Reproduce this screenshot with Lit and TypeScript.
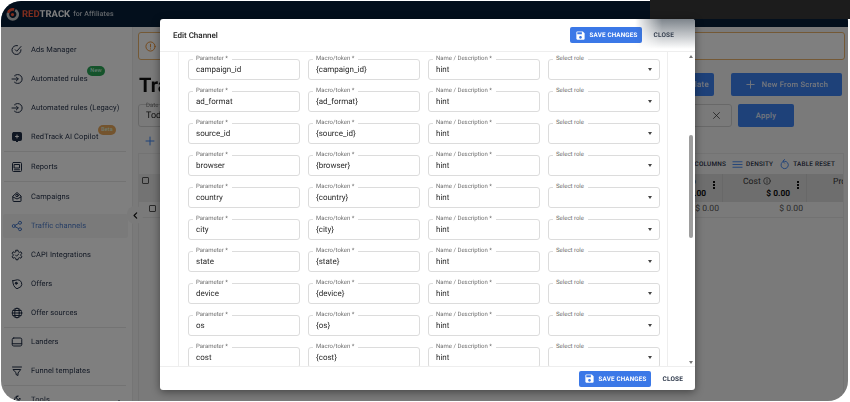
import { LitElement, html, css, svg } from "lit";
import { customElement } from "lit/decorators.js";

const ico = (body: unknown, cls = "ico") =>
  html`<svg class=${cls} viewBox="0 0 24 24" fill="none" stroke="currentColor" stroke-width="2" stroke-linecap="round" stroke-linejoin="round">${body}</svg>`;

const SAVE = svg`<path fill="currentColor" stroke="none" d="M17 3H5c-1.11 0-2 .9-2 2v14c0 1.1.89 2 2 2h14c1.1 0 2-.9 2-2V7l-4-4zm-5 16c-1.66 0-3-1.34-3-3s1.34-3 3-3 3 1.34 3 3-1.34 3-3 3zm3-10H5V5h10v4z"/>`;

const ICONS: Record<string, unknown> = {
  ads: svg`<path d="M20 11.5A9 9 0 1 1 13 3.2"/><path d="M8.5 11.5l3 3L20 5"/>`,
  rule: svg`<path d="M7 5.5A9 9 0 1 1 7 18.5"/><path d="M2 12h12"/><path d="M10.5 8l4 4-4 4"/>`,
  copilot: svg`<rect x="3" y="3" width="18" height="16" rx="2" fill="currentColor"/><path d="M9 19l3 3 3-3" fill="currentColor"/><path d="M12 8v6M9 11h6" stroke="#fff"/>`,
  reports: svg`<rect x="3" y="3" width="18" height="18" rx="2"/><rect x="7" y="7" width="10" height="7"/><path d="M7 17.5h10"/>`,
  camp: svg`<path d="M4 10l8-7 8 7v10a1 1 0 0 1-1 1H5a1 1 0 0 1-1-1z"/><path d="M4 12l8 4 8-4"/><circle cx="12" cy="9" r="2.5"/>`,
  traffic: svg`<circle cx="5.5" cy="12" r="3"/><circle cx="18" cy="5.5" r="3"/><circle cx="18" cy="18.5" r="3"/><path d="M8.2 10.5l7-3.6M8.2 13.5l7 3.6"/>`,
  capi: svg`<path d="M10 2.5h4l.6 3 2.4 1.2 2.8-1.1 2 3.4-2.3 2v2l2.3 2-2 3.4-2.8-1.1-2.4 1.2-.6 3h-4l-.6-3L7 17.3l-2.8 1.1-2-3.4 2.3-2v-2l-2.3-2 2-3.4L7 6.7l2.4-1.2z"/><path d="M9 12l2.2 2.2L15.5 10"/>`,
  offers: svg`<path d="M3.5 5.5L13 3.5a8.5 8.5 0 0 1 6.5 14L12 21.5C6 19 3.5 12 3.5 5.5z"/><circle cx="10.5" cy="10.5" r="2" fill="currentColor"/>`,
  globe: svg`<circle cx="12" cy="12" r="9.5"/><ellipse cx="12" cy="12" rx="4.5" ry="9.5"/><path d="M2.5 12h19M4 7h16M4 17h16"/>`,
  landers: svg`<rect x="2.5" y="4" width="19" height="16" rx="3"/><path d="M2.5 15.5h19"/>`,
  funnel: svg`<path d="M3 4h18"/><path d="M4.5 9h15L14 16v5l-4-2v-3z"/>`,
  tools: svg`<path d="M14 4a5 5 0 0 0-6 6L3 15l3 4 5.5-5a5 5 0 0 0 6.5-6l-3 3-3-1-1-3z"/>`,
};

const NAV: { i: string; t: string; sep?: string; active?: boolean; badge?: string; caret?: boolean }[] = [
  { i: "ads", t: "Ads Manager" },
  { i: "rule", t: "Automated rules", badge: "New" },
  { i: "rule", t: "Automated rules (Legacy)" },
  { i: "copilot", t: "RedTrack AI Copilot", badge: "Beta", sep: "wide" },
  { i: "reports", t: "Reports", sep: "wide" },
  { i: "camp", t: "Campaigns" },
  { i: "traffic", t: "Traffic channels", active: true },
  { i: "capi", t: "CAPI Integrations" },
  { i: "offers", t: "Offers" },
  { i: "globe", t: "Offer sources", sep: "flat" },
  { i: "landers", t: "Landers" },
  { i: "funnel", t: "Funnel templates", sep: "flat" },
  { i: "tools", t: "Tools", caret: true },
];

const ROWS: [string, string][] = [
  ["campaign_id", "{campaign_id}"],
  ["ad_format", "{ad_format}"],
  ["source_id", "{source_id}"],
  ["browser", "{browser}"],
  ["country", "{country}"],
  ["city", "{city}"],
  ["state", "{state}"],
  ["device", "{device}"],
  ["os", "{os}"],
  ["cost", "{cost}"],
];

@customElement("app-root")
export class AppRoot extends LitElement {
  static styles = css`
    :host {
      display: block;
      width: 850px;
      height: 402px;
      box-sizing: border-box;
      padding: 1px 2px 1px 1px;
      background: #fff;
      font-family: Roboto, "Liberation Sans", sans-serif;
      position: relative;
      overflow: hidden;
      text-rendering: geometricPrecision;
    }
    .window {
      position: relative;
      height: 100%;
      border-radius: 20px;
      overflow: hidden;
      background: #f5f5f5;
      display: flex;
      flex-direction: column;
      filter: blur(0.35px);
    }
    .top {
      height: 26px;
      flex: none;
      background: #071f38;
      display: flex;
      align-items: center;
      padding-left: 5px;
      gap: 3px;
      font-size: 9.5px;
      font-weight: 700;
    }
    .logo { width: 13px; height: 13px; flex: none; }
    .red { color: #ff5a3c; }
    .track { color: #fff; margin-left: -3px; }
    .aff { color: #c4ccd4; font-weight: 500; font-size: 7px; letter-spacing: 0.1px; }
    .body { flex: 1; display: flex; min-height: 0; }
    .side {
      width: 132px;
      flex: none;
      background: #fff;
      border-right: 1px solid #eaeaea;
      padding-top: 8px;
      box-sizing: border-box;
      color: #1f2c44;
      overflow: hidden;
      display: flex;
      flex-direction: column;
    }
    .item {
      position: relative;
      height: 24px;
      flex: none;
      margin: 2.5px 4px 2.5px 2px;
      display: flex;
      align-items: center;
      font-size: 7.5px;
      letter-spacing: 0.1px;
      border-radius: 2px;
      white-space: nowrap;
    }
    .item.on { background: #f5f5f5; color: #4d7cc9; }
    .ico { width: 12px; height: 12px; margin-left: 8px; margin-right: 8px; flex: none; }
    .badge {
      position: absolute;
      top: -1px;
      height: 10px;
      border-radius: 5px;
      font-size: 5.5px;
      line-height: 10px;
      text-align: center;
      color: #dfe;
    }
    .badge.new { left: 84px; width: 18px; background: #2aa757; }
    .badge.beta { left: 95px; width: 18px; background: #e8a95c; top: 0; }
    .caret { position: absolute; left: 114px; top: 10px; width: 0; height: 0; border: 2.5px solid transparent; border-bottom-color: #2a3850; }
    .sep { height: 1px; flex: none; background: #e6e6e6; margin: 0 6px 0 3px; }
    .sep.flat { margin-bottom: -1px; }
    .main {
      flex: 1;
      min-width: 0;
      padding: 5px 4px 0 5px;
      display: flex;
      flex-direction: column;
      position: relative;
    }
    .alert {
      height: 28px;
      flex: none;
      box-sizing: border-box;
      border: 1px solid #e8b36c;
      border-radius: 3px;
      margin-right: -1px;
      display: flex;
      align-items: center;
      padding-left: 6px;
      color: #e88a2a;
      background: #fff;
    }
    .alert svg { width: 11px; height: 11px; }
    .headrow { height: 23px; margin-top: 13px; flex: none; display: flex; align-items: center; }
    .title { font-size: 20px; font-weight: 700; color: #111; margin-left: 1px; flex: 1; white-space: nowrap; overflow: hidden; }
    .btn {
      height: 23px;
      border-radius: 2px;
      background: #3d83f2;
      color: #e8eefb;
      font-size: 7.6px;
      letter-spacing: 0.25px;
      display: flex;
      align-items: center;
      justify-content: center;
      font-weight: 500;
      gap: 6px;
      box-sizing: border-box;
      white-space: nowrap;
    }
    .btn svg { width: 11px; height: 11px; }
    .bfrom { width: 64px; margin-right: 17px; justify-content: flex-end; padding-right: 5px; overflow: hidden; font-size: 8px; }
    .bnew { width: 111px; margin-right: 2px; }
    .filters { height: 23px; margin-top: 8px; flex: none; display: flex; gap: 6px; }
    .date {
      width: 120px;
      box-sizing: border-box;
      border: 1px solid #d0d0d0;
      border-radius: 3px;
      font-size: 9px;
      color: #222;
      padding: 6px 7px;
      position: relative;
    }
    .date i { position: absolute; top: -3px; left: 7px; font-style: normal; font-size: 6px; color: #777; }
    .grow { flex: 1; }
    .xbox {
      width: 100px;
      box-sizing: border-box;
      border: 1px solid #d0d0d0;
      border-radius: 3px;
      display: flex;
      align-items: center;
      justify-content: flex-end;
      padding-right: 10px;
      color: #333;
    }
    .xbox svg { width: 9px; height: 9px; }
    .bapply { width: 56px; margin-right: 50px; }
    .plusrow { height: 27px; flex: none; display: flex; align-items: center; padding-left: 6px; color: #3d83f2; }
    .plusrow svg { width: 12px; height: 12px; }
    .table {
      flex: 1;
      border: 1px solid #e6e6e6;
      border-bottom: 0;
      background: #f5f5f5;
      min-height: 0;
      margin-top: -1px;
    }
    .tools {
      height: 20px;
      display: flex;
      align-items: center;
      justify-content: flex-end;
      font-size: 6.4px;
      font-weight: 500;
      letter-spacing: 0.2px;
      color: #1f2c44;
      padding-right: 8px;
      white-space: nowrap;
    }
    .tools svg { width: 11px; height: 11px; color: #3d83f2; margin: 0 3px 0 6px; }
    .thead { height: 28px; background: #dcdcdc; display: flex; justify-content: flex-end; }
    .th {
      width: 84px;
      box-sizing: border-box;
      border-left: 1px solid #d0d0d0;
      position: relative;
      font-size: 8.6px;
      color: #333;
      padding: 3px 0 0 20px;
    }
    .th b { position: absolute; right: 16px; bottom: 3px; font-size: 8.4px; font-weight: 700; color: #111; }
    .th u { position: absolute; right: 7px; top: 7px; width: 2px; height: 2px; background: #111; box-shadow: 0 3px #111, 0 6px #111; }
    .th svg { width: 8px; height: 8px; vertical-align: -1px; }
    .th.pro { width: 37px; padding-left: 26px; overflow: hidden; white-space: nowrap; }
    .th.first { flex: 1; border-left: 0; padding: 0; }
    .th.side-col { padding-left: 0; text-align: right; padding-right: 26px; }
    .cb { position: absolute; width: 5px; height: 5px; border: 1px solid #555; border-radius: 1px; }
    .cb.a { left: 3px; top: 3px; }
    .cb.b { left: 10px; top: 3px; }
    .first-bg { background: #e6e6e6; }
    .tr { height: 15px; display: flex; justify-content: flex-end; border-bottom: 1px solid #e4e4e4; font-size: 8.6px; color: #555; }
    .td { width: 84px; box-sizing: border-box; text-align: right; padding: 2px 3px 0 0; }
    .td.pro { width: 37px; }
    .td.first { flex: 1; position: relative; }
    .collapse {
      position: absolute;
      left: 126px;
      top: 205px;
      width: 16px;
      height: 18px;
      border-radius: 9px;
      background: #f5f5f5;
      display: flex;
      align-items: center;
      justify-content: center;
      color: #111;
    }
    .collapse svg { width: 7px; height: 7px; stroke-width: 4; margin: 0; }
    .scrim { position: absolute; inset: 0; background: rgba(0, 0, 0, 0.5); }
    .strip { position: absolute; left: 650px; top: 0; right: 0; height: 19px; background: #1c1c1c; }
    .dialog {
      position: absolute;
      left: 160px;
      top: 19px;
      width: 535px;
      height: 371px;
      background: #fff;
      border-radius: 3px;
      box-shadow: 0 2px 8px rgba(0, 0, 0, 0.45);
      display: flex;
      flex-direction: column;
      color: #333;
      overflow: hidden;
      filter: blur(0.35px);
    }
    .dhead {
      height: 33px;
      flex: none;
      box-sizing: border-box;
      border-bottom: 1px solid #eee;
      display: flex;
      align-items: center;
      padding: 0 21px 0 13px;
      position: relative;
    }
    .dtitle { font-size: 8px; font-weight: 500; color: #222; flex: 1; }
    .glare {
      position: absolute;
      right: 0;
      top: 0;
      width: 60px;
      height: 30px;
      background: linear-gradient(to bottom, rgba(70, 80, 90, 0.7), rgba(255, 255, 255, 0));
      -webkit-mask-image: linear-gradient(to right, transparent, #000 45%);
      mask-image: linear-gradient(to right, transparent, #000 45%);
      pointer-events: none;
    }
    .save {
      height: 16px;
      width: 72px;
      box-sizing: border-box;
      border-radius: 2px;
      background: #3b78e7;
      color: #fff;
      display: flex;
      align-items: center;
      justify-content: center;
      gap: 4px;
      font-size: 6.3px;
      font-weight: 700;
      letter-spacing: 0.15px;
      white-space: nowrap;
    }
    .save svg { width: 11px; height: 11px; }
    .close { width: 32px; text-align: right; font-size: 6.5px; font-weight: 700; color: #2f3a4c; letter-spacing: 0.15px; }
    .dbody { flex: 1; min-height: 0; display: flex; }
    .panel {
      width: 490px;
      margin-left: 18px;
      box-sizing: border-box;
      border-left: 1px solid #eee;
      border-right: 1px solid #eee;
      padding: 7px 0 0 9px;
      display: flex;
      flex-direction: column;
      gap: 11px;
      overflow: hidden;
    }
    .row { display: flex; gap: 8px; flex: none; }
    .field {
      width: 112px;
      height: 21px;
      box-sizing: border-box;
      border: 1px solid #dcdcdc;
      border-radius: 3px;
      position: relative;
      font-size: 8px;
      line-height: 19px;
      padding-left: 7px;
      color: #2a2a2a;
      flex: none;
      white-space: nowrap;
    }
    .lab {
      position: absolute;
      left: 4px;
      top: -5px;
      padding: 0 4px 0 3px;
      background: #fff;
      font-size: 6px;
      line-height: 8px;
      color: #6f6f6f;
    }
    .arrow {
      position: absolute;
      right: 7px;
      top: 8px;
      width: 0;
      height: 0;
      border: 2.5px solid transparent;
      border-top: 3px solid #444;
      border-bottom: 0;
    }
    .sb { width: 9px; margin-left: 18px; flex: none; display: flex; flex-direction: column; align-items: center; padding: 3px 0 2px; box-sizing: border-box; }
    .up, .dn { width: 0; height: 0; border: 2.5px solid transparent; flex: none; }
    .up { border-bottom: 3px solid #777; border-top: 0; }
    .dn { border-top: 3px solid #777; border-bottom: 0; }
    .thumb { width: 4px; height: 103px; background: #9d9d9d; border-radius: 2px; margin-top: 77px; flex: none; }
    .dfoot {
      height: 24px;
      flex: none;
      box-sizing: border-box;
      border-top: 1px solid #eee;
      display: flex;
      align-items: center;
      justify-content: flex-end;
      padding-right: 12px;
    }
  `;

  private field(label: string, value: string, select = false) {
    return html`<div class="field"><span class="lab">${label}</span>${value}${select ? html`<span class="arrow"></span>` : ""}</div>`;
  }

  render() {
    return html`
      <div class="window">
        <div class="top">
          <svg class="logo" viewBox="0 0 24 24" fill="none" stroke-width="5">
            <path d="M4 9a9 9 0 0 1 11-6" stroke="#ff5a3c"/>
            <path d="M17 4a9 9 0 1 1-13 5" stroke="#c9c9c9"/>
            <circle cx="12" cy="12" r="3" fill="#ff5a3c"/>
          </svg>
          <span class="red">RED</span><span class="track">TRACK</span>
          <span class="aff">for Affiliates</span>
        </div>
        <div class="body">
          <nav class="side">
            ${NAV.map(
              (n) => html`
                <div class="item ${n.active ? "on" : ""}">
                  ${ico(ICONS[n.i])}${n.t}
                  ${n.badge ? html`<span class="badge ${n.badge === "New" ? "new" : "beta"}">${n.badge}</span>` : ""}
                  ${n.caret ? html`<span class="caret"></span>` : ""}
                </div>
                ${n.sep ? html`<div class="sep ${n.sep}"></div>` : ""}
              `
            )}
          </nav>
          <main class="main">
            <div class="alert">${ico(svg`<circle cx="12" cy="12" r="10"/><path d="M12 7v6M12 17v.5"/>`, "")}</div>
            <div class="headrow">
              <div class="title">Traffic channels</div>
              <div class="btn bfrom">From Template</div>
              <div class="btn bnew">${ico(svg`<path d="M12 4v16M4 12h16"/>`, "")}New From Scratch</div>
            </div>
            <div class="filters">
              <div class="date"><i>Date</i>Today</div>
              <div class="grow"></div>
              <div class="xbox">${ico(svg`<path d="M4 4l16 16M20 4L4 20"/>`, "")}</div>
              <div class="btn bapply">Apply</div>
            </div>
            <div class="plusrow">${ico(svg`<path d="M12 4v16M4 12h16"/>`, "")}</div>
            <div class="table">
              <div class="tools">
                COLUMNS
                ${ico(svg`<path d="M2 6h20M2 12h20M2 18h20"/>`, "")}DENSITY
                ${ico(svg`<path d="M7 7a8 8 0 1 0 5-2H9M12 1L8.5 5l3.5 4"/>`, "")}TABLE RESET
              </div>
              <div class="thead">
                <div class="th first first-bg"><span class="cb a"></span></div>
                <div class="th side-col">o<b>$ 0.00</b><u></u></div>
                <div class="th">Cost ${ico(svg`<circle cx="12" cy="12" r="10"/><path d="M12 11v6M12 7v.5"/>`, "")}<b>$ 0.00</b><u></u></div>
                <div class="th pro">Pro</div>
              </div>
              <div class="tr">
                <div class="td first"><span class="cb b"></span></div>
                <div class="td">$ 0.00</div>
                <div class="td">$ 0.00</div>
                <div class="td pro"></div>
              </div>
            </div>
          </main>
        </div>
        <div class="collapse">${ico(svg`<path d="M16 3L7 12l9 9"/>`, "")}</div>
        <div class="scrim"></div>
      </div>
      <div class="strip"></div>
      <section class="dialog">
        <header class="dhead">
          <div class="dtitle">Edit Channel</div>
          <div class="save">${ico(SAVE, "")}SAVE CHANGES</div>
          <div class="close">CLOSE</div>
          <div class="glare"></div>
        </header>
        <div class="dbody">
          <div class="panel">
            ${ROWS.map(
              ([p, m]) => html`
                <div class="row">
                  ${this.field("Parameter *", p)}
                  ${this.field("Macro/token *", m)}
                  ${this.field("Name / Description *", "hint")}
                  ${this.field("Select role", "", true)}
                </div>
              `
            )}
          </div>
          <div class="sb">
            <div class="up"></div>
            <div class="thumb"></div>
            <div class="grow"></div>
            <div class="dn"></div>
          </div>
        </div>
        <footer class="dfoot">
          <div class="save">${ico(SAVE, "")}SAVE CHANGES</div>
          <div class="close">CLOSE</div>
        </footer>
      </section>
    `;
  }
}
